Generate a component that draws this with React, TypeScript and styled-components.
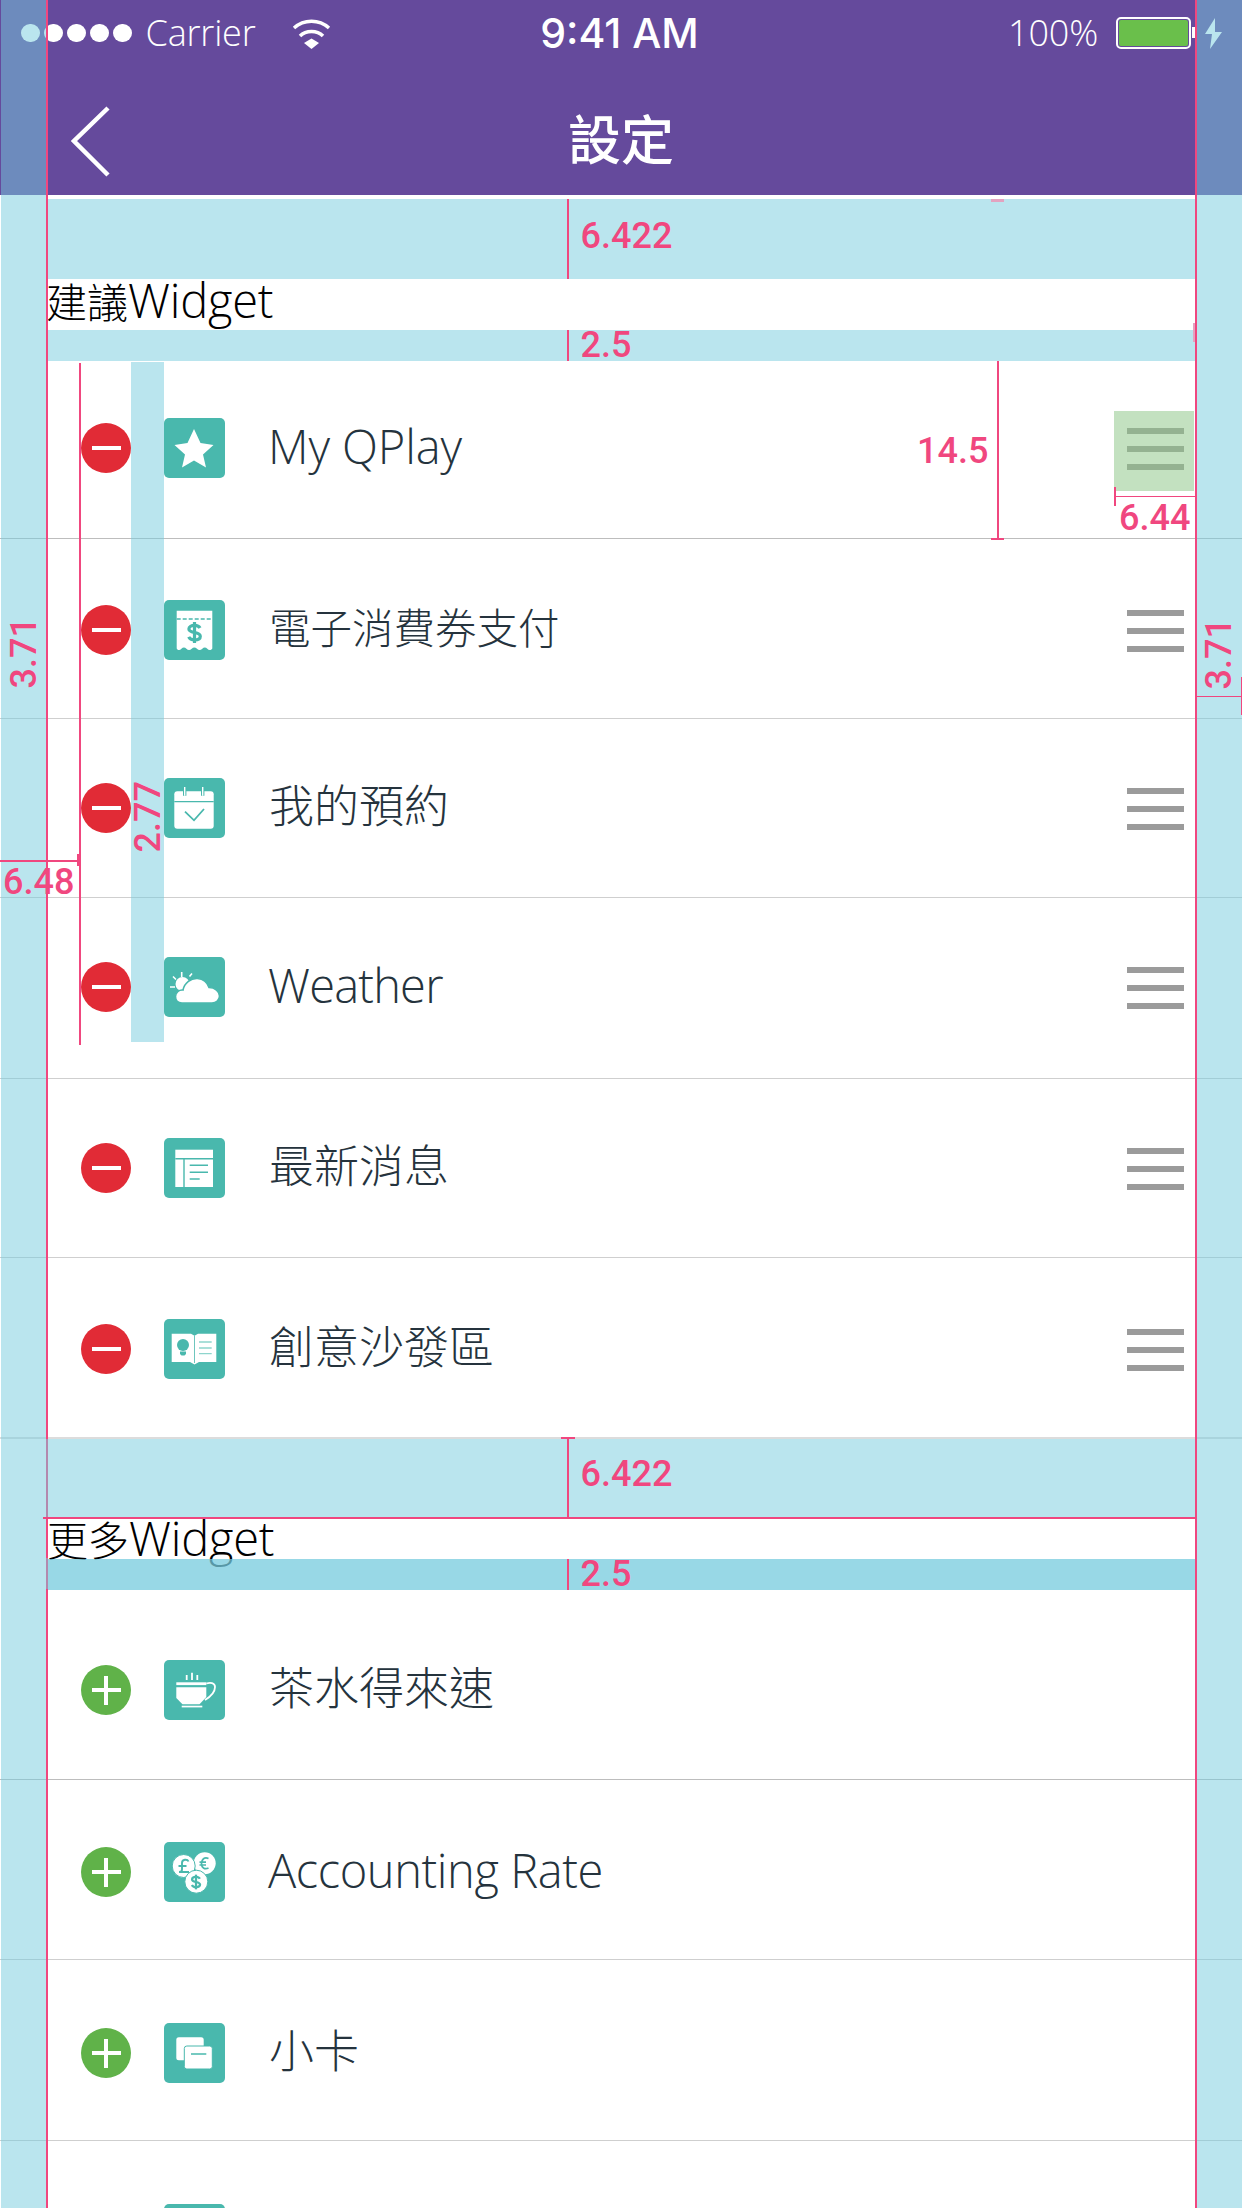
import React from "react";
import styled, { createGlobalStyle } from "styled-components";

const TEAL = "#49b8ad";
const PINK = "#f0477f";
const WASH = "rgba(117,203,221,.5)";
const UI_FONT = `"Open Sans", "Noto Sans CJK TC", sans-serif`;

const Global = createGlobalStyle`
  html, body { margin: 0; padding: 0; background: #fff; }
  * { box-sizing: border-box; }
`;

const Screen = styled.div`
  position: relative;
  width: 1242px;
  height: 2208px;
  overflow: hidden;
  background: #fff;
  font-family: ${UI_FONT};
`;

/* ---------- header ---------- */
const Header = styled.header`
  height: 195px;
  background: #654a9c;
  color: #fff;
  display: flex;
  flex-direction: column;
`;
const StatusBar = styled.div`
  height: 66px;
  padding: 0 20px 0 21px;
  display: grid;
  grid-template-columns: 1fr auto 1fr;
  align-items: center;
`;
const StatusLeft = styled.div`
  display: flex;
  align-items: center;
`;
const StatusRight = styled.div`
  display: flex;
  align-items: center;
  justify-content: flex-end;
`;
const Dots = styled.div`
  display: flex;
  gap: 4.5px;
  margin-right: 14px;
`;
const Dot = styled.span`
  width: 18.5px;
  height: 18.5px;
  border-radius: 50%;
  background: #fff;
`;
const StatusText = styled.span`
  font-size: 36px;
  font-weight: 300;
  line-height: 40px;
  letter-spacing: -0.2px;
`;
const Time = styled.span`
  margin-left: -4px;
  font-family: Inter, "Liberation Sans", sans-serif;
  font-size: 41px;
  font-weight: 500;
  line-height: 44px;
`;
const WifiSvg = styled.svg`
  margin-left: 37px;
  display: block;
`;
const Battery = styled.div`
  position: relative;
  width: 75px;
  height: 32px;
  margin-left: 18px;
  border: 2px solid #fff;
  border-radius: 5px;
  padding: 1px;
  &::after {
    content: "";
    position: absolute;
    right: -7px;
    top: 8px;
    width: 4px;
    height: 11px;
    background: #fff;
  }
`;
const BatteryFill = styled.div`
  height: 100%;
  border-radius: 2px;
  background: #6abf4b;
`;
const BoltSvg = styled.svg`
  margin-left: 14px;
  display: block;
`;
const NavBar = styled.nav`
  flex: 1;
  padding: 22px 71px 0;
  display: grid;
  grid-template-columns: 1fr auto 1fr;
  align-items: center;
`;
const NavTitle = styled.h1`
  margin: 0 0 10px;
  font-family: "Noto Sans CJK TC", sans-serif;
  font-size: 53px;
  font-weight: 500;
  line-height: 60px;
`;

/* ---------- sections ---------- */
const TopGap = styled.div`
  height: 4px;
`;
const Band = styled.div<{ $h: number; $deep?: boolean }>`
  position: relative;
  z-index: 1;
  height: ${(p) => p.$h}px;
  margin: 0 47px 0 46px;
  padding-left: 521px;
  display: flex;
  align-items: flex-start;
  gap: 12px;
  background: ${(p) => (p.$deep ? "rgba(117,203,221,.75)" : "#bae5ee")};
`;
const BandRule = styled.span`
  width: 1.5px;
  align-self: stretch;
  background: ${PINK};
`;
const BandLabel = styled.span<{ $top: number }>`
  margin-top: ${(p) => p.$top}px;
  font-family: Roboto, sans-serif;
  font-size: 36px;
  font-weight: 500;
  line-height: 36px;
  color: ${PINK};
`;
const SectionTitle = styled.h2<{ $h: number; $lh: number; $x: number }>`
  margin: 0 47px 0 ${(p) => p.$x}px;
  height: ${(p) => p.$h}px;
  font-size: 41px;
  font-weight: 300;
  line-height: ${(p) => p.$lh}px;
  color: #000;
  white-space: nowrap;
`;
const TitleLatin = styled.span`
  font-size: 47px;
  letter-spacing: -0.2px;
`;

const List = styled.ul`
  margin: 0;
  padding: 0;
  list-style: none;
`;
const Row = styled.li<{ $h: number; $pt?: number; $pb?: number; $line?: string; $lw?: number }>`
  height: ${(p) => p.$h}px;
  padding: ${(p) => p.$pt || 0}px 58px ${(p) => p.$pb || 0}px 81px;
  display: flex;
  align-items: center;
  border-bottom: ${(p) => p.$lw || 1}px solid ${(p) => p.$line || "#bdbdbd"};
`;
const RoundBtn = styled.span<{ $add?: boolean }>`
  position: relative;
  flex: none;
  width: 50px;
  height: 50px;
  margin-right: 33px;
  border-radius: 50%;
  background: ${(p) => (p.$add ? "#60b249" : "#e12b36")};
  &::before {
    content: "";
    position: absolute;
    left: 10.5px;
    right: 10.5px;
    top: 23px;
    height: 4px;
    background: #fff;
  }
  &::after {
    content: "";
    display: ${(p) => (p.$add ? "block" : "none")};
    position: absolute;
    top: 10.5px;
    bottom: 10.5px;
    left: 23px;
    width: 4px;
    background: #fff;
  }
`;
const Tile = styled.span`
  flex: none;
  width: 61px;
  height: 60px;
  border-radius: 5px;
  background: ${TEAL};
  display: block;
`;
const TileSvg = styled.svg`
  display: block;
  width: 61px;
  height: 60px;
`;
const Name = styled.span<{ $latin?: boolean; $size?: number; $track?: number }>`
  margin: 0 0 5px ${(p) => (p.$latin ? 43 : 44)}px;
  font-size: ${(p) => p.$size || (p.$latin ? 47 : 45)}px;
  font-weight: ${(p) => (p.$latin ? 350 : 300)};
  line-height: 60px;
  letter-spacing: ${(p) => p.$track || 0}px;
  color: #25333d;
  white-space: nowrap;
`;
const Handle = styled.span`
  margin: 2px 0 0 auto;
  display: flex;
  flex-direction: column;
  gap: 12px;
`;
const HandleBar = styled.span`
  width: 57px;
  height: 6px;
  background: #9b9b9b;
`;

/* ---------- redline overlay ---------- */
const Overlay = styled.div`
  position: absolute;
  inset: 0;
  z-index: 2;
  pointer-events: none;
`;
const Wash = styled.div<{ $x: number; $y: number; $w: number; $h: number }>`
  position: absolute;
  left: ${(p) => p.$x}px;
  top: ${(p) => p.$y}px;
  width: ${(p) => p.$w}px;
  height: ${(p) => p.$h}px;
  background: ${WASH};
`;
const HitArea = styled.div`
  position: absolute;
  left: 1114px;
  top: 411px;
  width: 80px;
  height: 80px;
  background: rgba(141, 198, 136, 0.53);
`;
const Guide = styled.div<{ $x: number; $y: number; $w: number; $h: number; $faded?: boolean }>`
  position: absolute;
  left: ${(p) => p.$x}px;
  top: ${(p) => p.$y}px;
  width: ${(p) => p.$w}px;
  height: ${(p) => p.$h}px;
  background: ${(p) => (p.$faded ? "#e3a3c0" : PINK)};
`;
const Measure = styled.span<{ $x: number; $y: number; $vertical?: boolean }>`
  position: absolute;
  left: ${(p) => p.$x}px;
  top: ${(p) => p.$y}px;
  font-family: Roboto, sans-serif;
  font-size: 36px;
  font-weight: 500;
  line-height: 36px;
  color: ${PINK};
  white-space: nowrap;
  ${(p) => (p.$vertical ? "writing-mode: vertical-rl; transform: rotate(180deg);" : "")}
`;

/* ---------- icons (drawn in tile pixels) ---------- */
const Svg: React.FC<{ children: React.ReactNode }> = ({ children }) => (
  <TileSvg viewBox="0 0 61 60">{children}</TileSvg>
);

const Dollar = ({ x, y, s = 1 }: { x: number; y: number; s?: number }) => (
  <g transform={`translate(${x} ${y}) scale(${s})`} fill="none" stroke={TEAL} strokeWidth={3.2}>
    <path d="M5.5-4.5C4.5-6.6 2.6-7.2 0-7.2c-3 0-5.6 1.3-5.6 3.7S-3-.6 0 0s5.8 1.2 5.8 3.7S3 7.4 0 7.4c-2.700 0-4.800-.9-5.800-3.100" />
    <path d="M0-10.500V10.500" />
  </g>
);

const IconStar = () => (
  <Svg>
    <polygon
      fill="#fff"
      points="30,11 36.500,25 49.500,27 39,36.500 42,49.500 30,42.500 18,49.500 21,36.500 10.500,27 23.500,25"
    />
  </Svg>
);
const IconReceipt = () => (
  <Svg>
    <path
      fill="#fff"
      d="M12.700 10.700H48.300V48.500c-1.500 2-3.500 2-5 .3-1.500-1.700-3.500-1.700-5 0-1.700 1.700-3.700 1.700-5.300 0-1.700-1.700-3.700-1.700-5.300 0-1.700 1.700-3.700 1.700-5.300 0-1.500-1.700-3.500-1.700-5 0-1.500 1.700-3.500 1.700-4.700-.3Z"
    />
    <path d="M12.700 19H48.300" stroke={TEAL} strokeWidth={1.400} strokeDasharray="4 2" fill="none" />
    <Dollar x={30.500} y={32.500} />
  </Svg>
);
const IconCalendar = () => (
  <Svg>
    <rect x={10.300} y={13.300} width={39.400} height={37.400} rx={3} fill="#fff" />
    <path d="M10.300 23.700H49.700" stroke={TEAL} strokeWidth={1.300} />
    <path d="M20.700 9V17.700M38.700 9V17.700" stroke={TEAL} strokeWidth={3.400} />
    <path d="M20.700 9V17.700M38.700 9V17.700" stroke="#fff" strokeWidth={1.400} />
    <path d="M21 33.700 30 42.300 40 31" fill="none" stroke={TEAL} strokeWidth={1.800} />
  </Svg>
);
const IconWeather = () => (
  <Svg>
    <circle cx={18.500} cy={27} r={7} fill="#fff" />
    <path
      d="M17.700 15V20M9 19.500l3 3M28 16.500l-2.500 3M6 30H11"
      stroke="#fff"
      strokeWidth={1.600}
      fill="none"
    />
    <path
      fill="#fff"
      stroke={TEAL}
      strokeWidth={1.600}
      d="M18 46C13 46 11.500 42 11.500 39.500 11.500 35.500 15 32.500 19 33 20.500 26 27 21 33.500 21.500 39.500 22 43.500 26 45 30.500 51 30.500 55.500 34.500 55.500 39 55.500 43 52 46 48 46Z"
    />
  </Svg>
);
const IconNews = () => (
  <Svg>
    <rect x={11.300} y={11.700} width={37.700} height={37.300} fill="#fff" />
    <path
      d="M11.300 20.700H49M20 20.700V49M25.700 27.300H44M25.700 34.300H44M25.700 41H35.700"
      stroke={TEAL}
      strokeWidth={1.400}
      fill="none"
    />
  </Svg>
);
const IconBook = () => (
  <Svg>
    <path fill="#fff" d="M7.700 14.700H27l3.500 2 3.500-2H52.300V43H35l-4.500 2.500L26 43H7.700Z" />
    <path d="M30.500 16.500V44" stroke={TEAL} strokeWidth={.8} />
    <circle cx={19} cy={26} r={6} fill={TEAL} />
    <path d="M16 32.500h6V35l-1.500 1.500h-3L16 35Z" fill={TEAL} />
    <path d="M35 23H47.700M35 29H47.700M35 34.700H47.700" stroke="#8ed5cd" strokeWidth={1.300} />
  </Svg>
);
const IconCup = () => (
  <Svg>
    <path d="M22.700 15V20M28 12.700V20M33.300 15V20" stroke="#fff" strokeWidth={1.800} />
    <rect x={12.300} y={22.300} width={30} height={2.800} fill="#fff" />
    <path fill="#fff" d="M12.300 27.300H42.300V37L35.500 44.300H18.500L12.300 38Z" />
    <path
      d="M42.300 23.500C46 22.500 51 22.500 51 27 51 32 46 37 41 40"
      fill="none"
      stroke="#fff"
      strokeWidth={1.800}
    />
    <rect x={17.700} y={45.700} width={20.600} height={1.700} fill="#fff" />
  </Svg>
);
const IconCoins = () => (
  <Svg>
    <circle cx={40.700} cy={21.300} r={11} fill="#fff" />
    <path
      d="M44.500 16.500C40.500 14.500 37.500 17.500 37.500 21.500S40.500 28 44.500 26M35.500 20.200H42M35.500 23H42"
      fill="none"
      stroke={TEAL}
      strokeWidth={1.700}
    />
    <circle cx={19.700} cy={24} r={11.500} fill="#fff" stroke={TEAL} strokeWidth={1} />
    <path
      d="M24.500 19.500C23.500 17 18 17 18 21V27.500C18 29 16.500 30 15 30H25M14.500 24H22.500"
      fill="none"
      stroke={TEAL}
      strokeWidth={1.900}
    />
    <circle cx={32.300} cy={39.700} r={11.500} fill="#fff" stroke={TEAL} strokeWidth={1} />
    <Dollar x={32} y={40} s={0.7} />
  </Svg>
);
const IconCards = () => (
  <Svg>
    <rect x={12.300} y={14.300} width={27.400} height={23} rx={2.500} fill="#fff" />
    <rect x={20.300} y={23} width={28} height={23} rx={2.500} fill="#fff" stroke={TEAL} strokeWidth={1} />
    <path d="M27 31H42.300" stroke={TEAL} strokeWidth={1.500} />
  </Svg>
);

/* ---------- data ---------- */
type Item = {
  name: string;
  latin?: boolean;
  size?: number;
  track?: number;
  Icon: React.FC;
  h: number;
  pt?: number;
  pb?: number;
  line?: string;
  lw?: number;
};

const current: Item[] = [
  { name: "My QPlay", latin: true, track: -0.1, Icon: IconStar, h: 178, pb: 3 },
  { name: "電子消費券支付", size: 41.5, Icon: IconReceipt, h: 180, pt: 3, line: "#cfcfcf" },
  { name: "我的預約", Icon: IconCalendar, h: 179, line: "#cfcfcf" },
  { name: "Weather", latin: true, track: -0.8, Icon: IconWeather, h: 181, pb: 2, line: "#cfcfcf" },
  { name: "最新消息", Icon: IconNews, h: 179, line: "#cfcfcf" },
  { name: "創意沙發區", Icon: IconBook, h: 181, pt: 3, line: "#dcdcdc", lw: 2 },
];
const more: Item[] = [
  { name: "茶水得來速", Icon: IconCup, h: 190, pt: 11 },
  { name: "Accounting Rate", latin: true, track: -0.4, Icon: IconCoins, h: 180, pt: 5, line: "#cfcfcf" },
  { name: "小卡", Icon: IconCards, h: 181, pt: 6, line: "#cfcfcf" },
];

export default function App() {
  return (
    <Screen>
      <Global />
      <Header>
        <StatusBar>
          <StatusLeft>
            <Dots>
              {[0, 1, 2, 3, 4].map((i) => (
                <Dot key={i} />
              ))}
            </Dots>
            <StatusText>Carrier</StatusText>
            <WifiSvg width={39} height={31} viewBox="0 0 39 31">
              <path d="M2 10C12 1 27 1 37 10" fill="none" stroke="#fff" strokeWidth={3.500} />
              <path d="M8 18C14 12 25 12 31 18" fill="none" stroke="#fff" strokeWidth={3.500} />
              <path d="M12 25 19.500 20.500 27 25 19.500 31Z" fill="#fff" />
            </WifiSvg>
          </StatusLeft>
          <Time>9:41 AM</Time>
          <StatusRight>
            <StatusText>100%</StatusText>
            <Battery>
              <BatteryFill />
            </Battery>
            <BoltSvg width={17} height={31} viewBox="0 0 17 31">
              <path fill="#fff" d="M10 0 0 16H7L5 31 17 14H10Z" />
            </BoltSvg>
          </StatusRight>
        </StatusBar>
        <NavBar>
          <svg width={40} height={72} viewBox="0 0 40 72">
            <path d="M37 2 3 35 37 69" fill="none" stroke="#fff" strokeWidth={4.500} />
          </svg>
          <NavTitle>設定</NavTitle>
        </NavBar>
      </Header>

      <TopGap />
      <Band $h={80}>
        <BandRule />
        <BandLabel $top={19}>6.422</BandLabel>
      </Band>
      <SectionTitle $h={51} $lh={43} $x={46}>
        建議<TitleLatin>Widget</TitleLatin>
      </SectionTitle>
      <Band $h={31}>
        <BandRule />
        <BandLabel $top={-3}>2.5</BandLabel>
      </Band>
      <List>
        {current.map(({ name, latin, size, track, Icon, h, pt, pb, line, lw }) => (
          <Row key={name} $h={h} $pt={pt} $pb={pb} $line={line} $lw={lw}>
            <RoundBtn />
            <Tile>
              <Icon />
            </Tile>
            <Name $latin={latin} $size={size} $track={track}>
              {name}
            </Name>
            <Handle>
              <HandleBar />
              <HandleBar />
              <HandleBar />
            </Handle>
          </Row>
        ))}
      </List>
      <Band $h={79}>
        <BandRule />
        <BandLabel $top={17}>6.422</BandLabel>
      </Band>
      <SectionTitle $h={41} $lh={41} $x={47}>
        更多<TitleLatin>Widget</TitleLatin>
      </SectionTitle>
      <Band $h={31} $deep>
        <BandRule />
        <BandLabel $top={-3}>2.5</BandLabel>
      </Band>
      <List>
        {more.map(({ name, latin, size, track, Icon, h, pt, line }) => (
          <Row key={name} $h={h} $pt={pt} $line={line}>
            <RoundBtn $add />
            <Tile>
              <Icon />
            </Tile>
            <Name $latin={latin} $size={size} $track={track}>
              {name}
            </Name>
          </Row>
        ))}
        <Row $h={180} $pt={6}>
          <RoundBtn $add />
          <Tile />
        </Row>
      </List>

      <Overlay>
        <Wash $x={1} $y={0} $w={45} $h={2208} />
        <Wash $x={1197} $y={0} $w={45} $h={2208} />
        <Wash $x={131} $y={362} $w={33} $h={680} />
        <HitArea />

        <Guide $x={46} $y={0} $w={2} $h={2208} />
        <Guide $x={1195} $y={0} $w={2} $h={2208} />
        <Guide $x={79} $y={363} $w={1.500} $h={682} />
        <Guide $x={997} $y={361} $w={2} $h={178} />
        <Guide $x={991} $y={538} $w={13} $h={2} />
        <Guide $x={1114} $y={495.500} $w={81} $h={1.500} />
        <Guide $x={1114} $y={487} $w={1.500} $h={19} />
        <Guide $x={0} $y={860} $w={79} $h={1.500} />
        <Guide $x={77} $y={854} $w={2} $h={12} />
        <Guide $x={1197} $y={695.500} $w={45} $h={1.500} />
        <Guide $x={1241} $y={677} $w={1} $h={38} />
        <Guide $x={561} $y={1437} $w={14} $h={2} />
        <Guide $x={43} $y={1517} $w={1154} $h={2} />
        <Guide $x={991} $y={199} $w={13} $h={3} $faded />
        <Guide $x={1193} $y={323} $w={2} $h={19} $faded />

        <Wash $x={46} $y={1439} $w={2} $h={78} />
        <Wash $x={46} $y={1558} $w={2} $h={31} />

        <Measure $x={917} $y={433}>14.5</Measure>
        <Measure $x={1119} $y={500}>6.44</Measure>
        <Measure $x={3} $y={864}>6.48</Measure>
        <Measure $x={6} $y={617} $vertical>3.71</Measure>
        <Measure $x={1201} $y={618} $vertical>3.71</Measure>
        <Measure $x={130} $y={781} $vertical>2.77</Measure>
      </Overlay>
    </Screen>
  );
}
